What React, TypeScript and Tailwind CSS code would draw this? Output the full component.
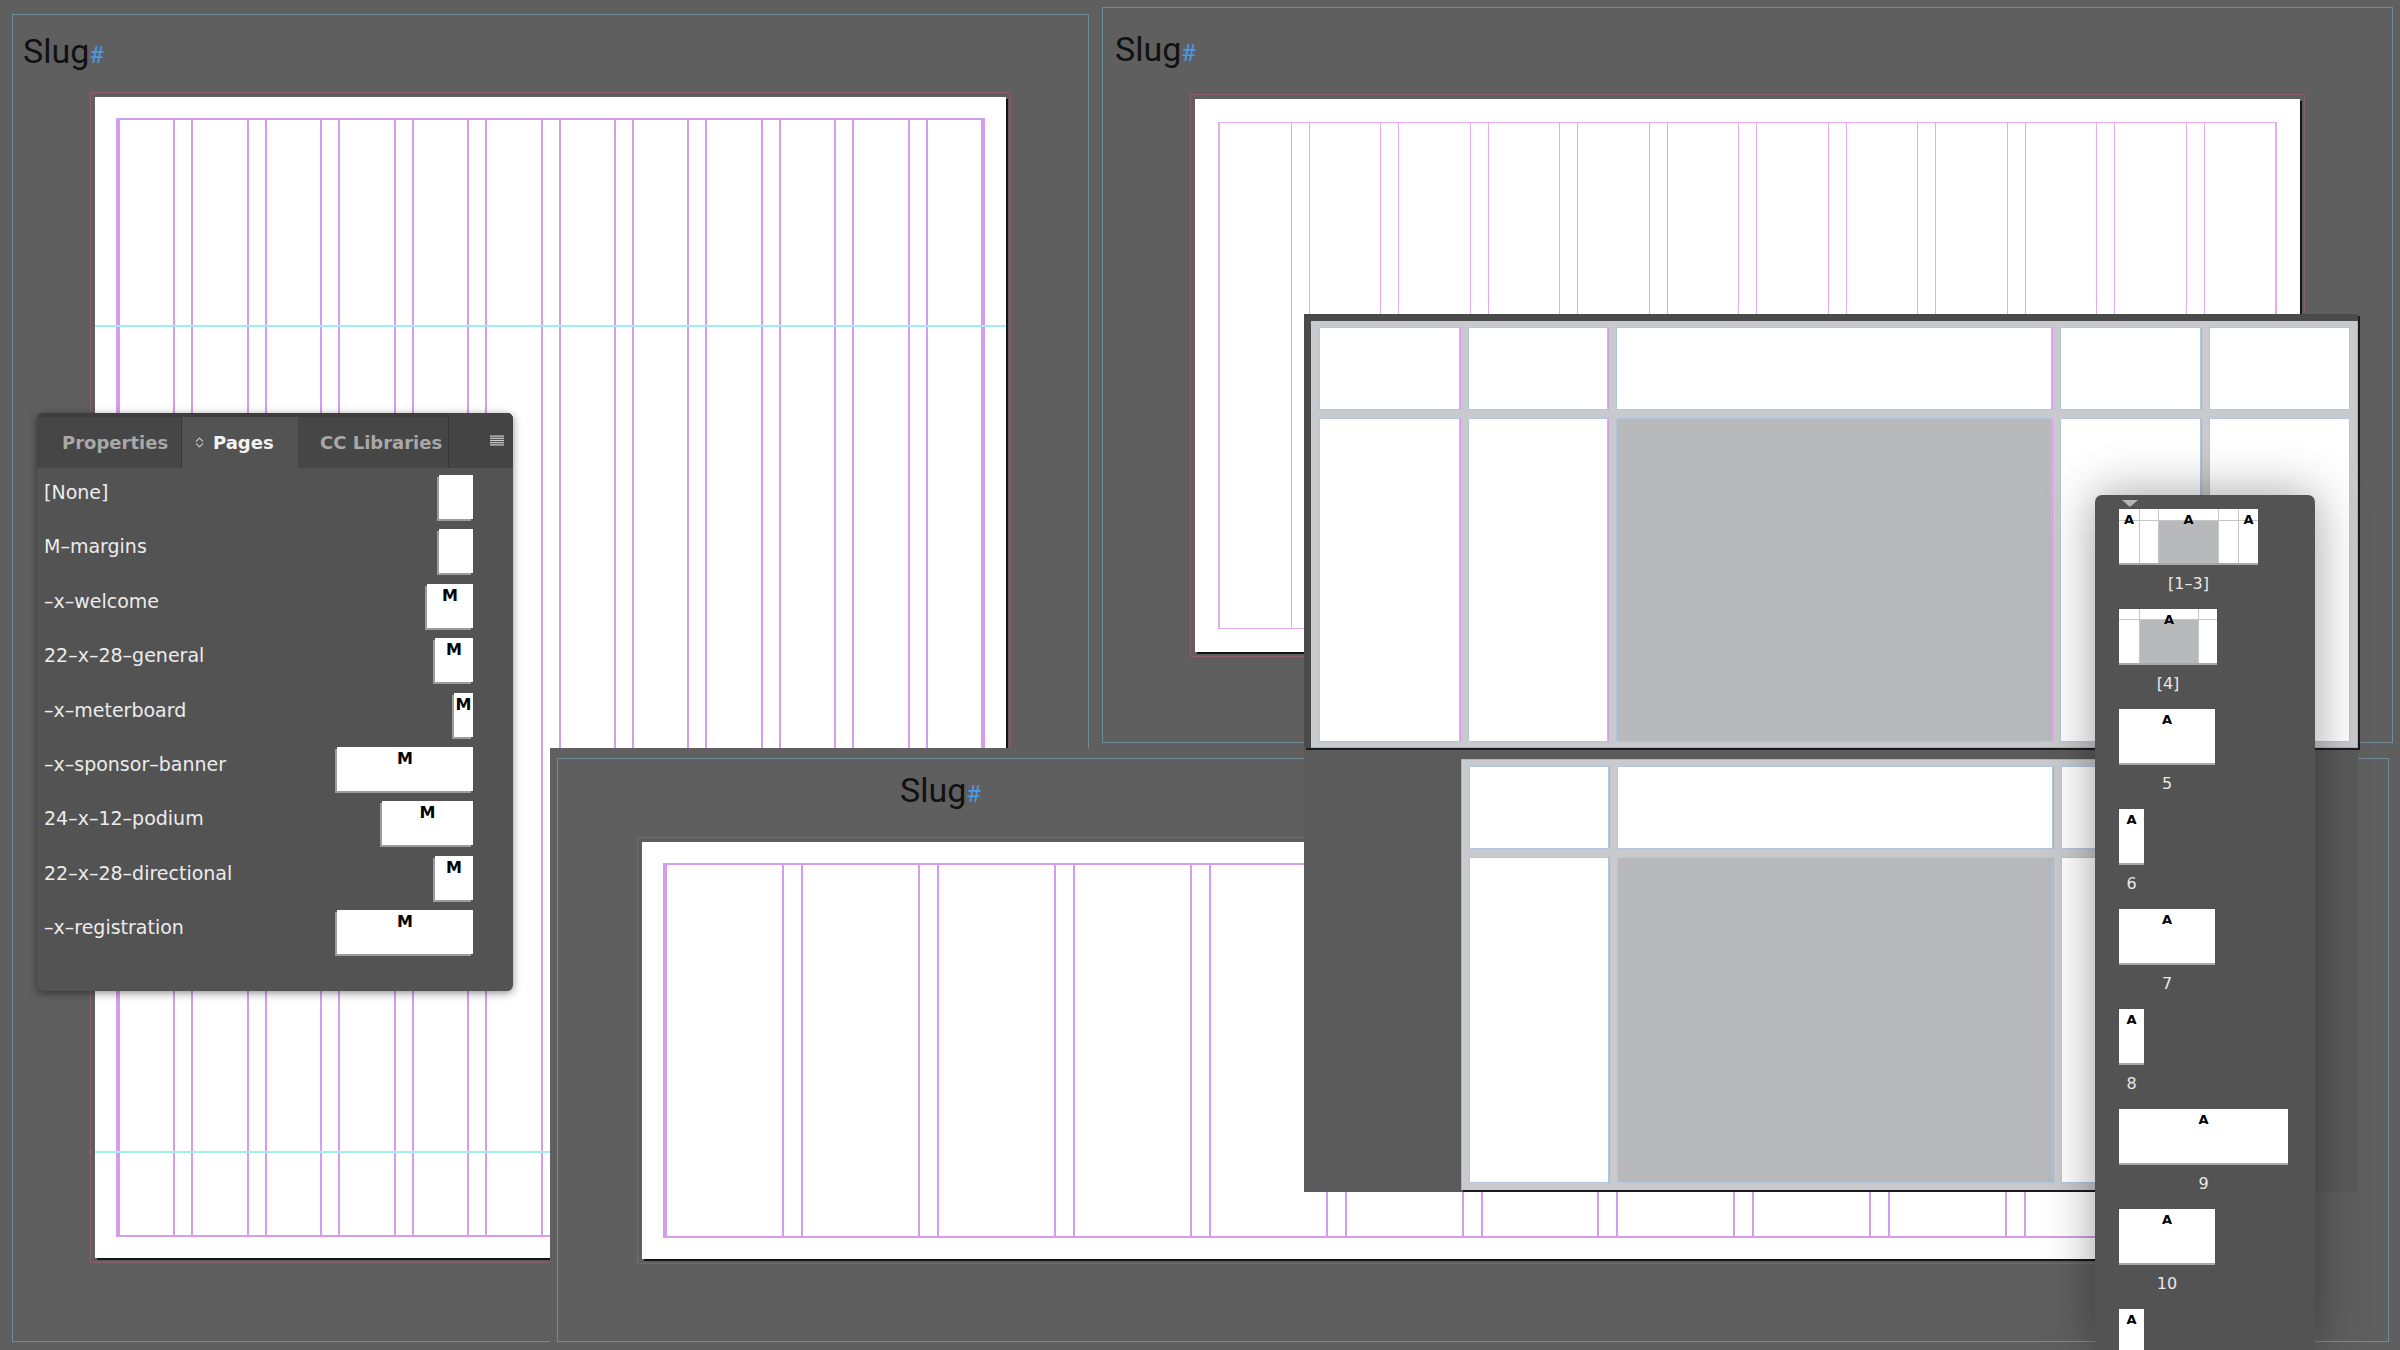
import React from "react";

const UI = "font-['DejaVu_Sans',sans-serif]";

function SlugLabel({ className }: { className: string }) {
  return (
    <div
      className={`flex w-fit items-baseline h-[34px] leading-[34px] font-['Roboto',sans-serif] text-[34px] text-[#111] ${className}`}
    >
      Slug<span className="text-[24px] text-[#4a98e6]">#</span>
    </div>
  );
}

interface PageProps {
  size: string;
  pad: string;
  gap: string;
  line: string;
  children?: React.ReactNode;
}

function Page({ size, pad, gap, line, children }: PageProps) {
  return (
    <div
      className={`relative shrink-0 bg-white outline-1 outline-offset-[4px] outline-[#8b5e6e] shadow-[2px_2px_0_#141414] ${size} ${pad}`}
    >
      <div className={`flex h-full ${line} ${gap}`}>
        {Array.from({ length: 12 }).map((_, i) => (
          <div key={i} className={`flex-1 ${line}`} />
        ))}
      </div>
      {children}
    </div>
  );
}

function FrameCell({ grey, guide }: { grey?: boolean; guide?: boolean }) {
  return (
    <div
      className={`border border-[#b2c6de] ${grey ? "bg-[#b8b9bb]" : "bg-white"} ${
        guide ? "shadow-[1px_0_0_#d39be8]" : ""
      }`}
    />
  );
}

interface Master {
  name: string;
  w: string;
  m: boolean;
}

const masters: Master[] = [
  { name: "[None]", w: "w-[34px]", m: false },
  { name: "M–margins", w: "w-[34px]", m: false },
  { name: "–x–welcome", w: "w-[46px]", m: true },
  { name: "22–x–28–general", w: "w-[38px]", m: true },
  { name: "–x–meterboard", w: "w-[19px]", m: true },
  { name: "–x–sponsor–banner", w: "w-[136px]", m: true },
  { name: "24–x–12–podium", w: "w-[91px]", m: true },
  { name: "22–x–28–directional", w: "w-[38px]", m: true },
  { name: "–x–registration", w: "w-[136px]", m: true },
];

function PagesPanel() {
  return (
    <div
      className={`absolute left-[37px] top-[413px] w-[476px] h-[578px] overflow-hidden rounded-[6px] bg-[#535353] shadow-[0_2px_8px_rgba(0,0,0,0.45)] ${UI}`}
    >
      <div className="flex h-[55px] bg-[#3d3d3d] pt-[4px] text-[18px] font-bold leading-none">
        <div className="flex h-full w-[145px] items-center border-r border-[#353535] bg-[#464646] pl-[25px] text-[#a8a8a8]">
          Properties
        </div>
        <div className="flex h-full w-[116px] items-center bg-[#535353] pl-[13px] text-[#f2f2f2]">
          <svg width="9" height="11" viewBox="0 0 9 11" className="mr-[9px]">
            <path d="M1 4.5 L4.5 1 L8 4.5 M1 6.5 L4.5 10 L8 6.5" stroke="#bdbdbd" strokeWidth="1.2" fill="none" />
          </svg>
          Pages
        </div>
        <div className="flex h-full w-[151px] items-center border-r border-[#353535] bg-[#464646] pl-[22px] text-[#a8a8a8]">
          CC Libraries
        </div>
        <div className="-mt-[4px] flex h-[55px] flex-1 items-center justify-end bg-[#444] pr-[9px]">
          <svg width="14" height="11" viewBox="0 0 14 11">
            {[0.5, 2.7, 4.9, 7.1, 9.3].map((y) => (
              <rect key={y} x="0" y={y} width="14" height="1.2" fill="#cfcfcf" />
            ))}
          </svg>
        </div>
      </div>
      <div className="flex flex-col pt-[2px]">
        {masters.map((r) => (
          <div key={r.name} className="flex h-[54.4px] items-start justify-between pl-[7px] pr-[40px]">
            <span className="mt-[10px] text-[19px] leading-[24px] text-[#ececec]">{r.name}</span>
            <div
              className={`mt-[5px] flex h-[44px] justify-center bg-white pt-[4px] shadow-[-2px_2px_0_#9c9c9c] ${r.w}`}
            >
              {r.m && <span className="text-[16px] font-bold leading-none text-black">M</span>}
            </div>
          </div>
        ))}
      </div>
    </div>
  );
}

function ThumbCol({ w, grey, a, top }: { w: string; grey?: boolean; a?: boolean; top: string }) {
  return (
    <div className={`relative flex flex-col ${w}`}>
      <div className={`${top} shrink-0 border-b border-[#c6c6c6] bg-white`} />
      <div className={`flex-1 ${grey ? "bg-[#b8b9bb]" : "bg-white"}`} />
      {a && (
        <span className="absolute inset-x-0 top-[4px] text-center text-[13px] font-bold leading-none text-black">
          A
        </span>
      )}
    </div>
  );
}

function VLine() {
  return <div className="w-[1px] bg-[#c6c6c6]" />;
}

function ThumbItem({ label, children }: { label?: string; children: React.ReactNode }) {
  return (
    <div className="flex flex-col items-center">
      {children}
      {label && <div className="h-[44px] pt-[9px] text-[16px] leading-[20px] text-[#e8e8e8]">{label}</div>}
    </div>
  );
}

function SimpleThumb({ w }: { w: string }) {
  return (
    <div className={`flex h-[56px] justify-center border-b-2 border-[#a8a8a8] bg-white pt-[4px] ${w}`}>
      <span className="text-[13px] font-bold leading-none text-black">A</span>
    </div>
  );
}

function ThumbPanel() {
  return (
    <div
      className={`absolute left-[2095px] top-[495px] h-[855px] w-[220px] overflow-hidden rounded-t-[7px] bg-[#535353] pl-[24px] pt-[5px] shadow-[0_0_50px_rgba(0,0,0,0.38)] ${UI}`}
    >
      <svg width="16" height="7" viewBox="0 0 16 7" className="ml-[3px] block">
        <path d="M0 0 H16 L8 7 Z" fill="#b6b6b6" />
      </svg>
      <div className="mt-[2px] flex flex-col items-start">
        <ThumbItem label="[1–3]">
          <div className="flex h-[56px] w-[139px] border-b-2 border-[#a8a8a8] bg-white">
            <ThumbCol w="w-[20px]" top="h-[12px]" a />
            <VLine />
            <ThumbCol w="w-[18px]" top="h-[12px]" />
            <VLine />
            <ThumbCol w="w-[59px]" top="h-[12px]" grey a />
            <VLine />
            <ThumbCol w="w-[19px]" top="h-[12px]" />
            <VLine />
            <ThumbCol w="w-[19px]" top="h-[12px]" a />
          </div>
        </ThumbItem>
        <ThumbItem label="[4]">
          <div className="flex h-[56px] w-[98px] border-b-2 border-[#a8a8a8] bg-white">
            <ThumbCol w="w-[20px]" top="h-[11px]" />
            <VLine />
            <ThumbCol w="w-[58px]" top="h-[11px]" grey a />
            <VLine />
            <ThumbCol w="w-[18px]" top="h-[11px]" />
          </div>
        </ThumbItem>
        <ThumbItem label="5">
          <SimpleThumb w="w-[96px]" />
        </ThumbItem>
        <ThumbItem label="6">
          <SimpleThumb w="w-[25px]" />
        </ThumbItem>
        <ThumbItem label="7">
          <SimpleThumb w="w-[96px]" />
        </ThumbItem>
        <ThumbItem label="8">
          <SimpleThumb w="w-[25px]" />
        </ThumbItem>
        <ThumbItem label="9">
          <SimpleThumb w="w-[169px]" />
        </ThumbItem>
        <ThumbItem label="10">
          <SimpleThumb w="w-[96px]" />
        </ThumbItem>
        <ThumbItem>
          <SimpleThumb w="w-[25px]" />
        </ThumbItem>
      </div>
    </div>
  );
}

export default function App() {
  return (
    <div className="relative h-[1350px] w-[2400px] overflow-hidden bg-[#5f5f5f]">
      {/* spread 1 */}
      <div className="absolute left-[12px] top-[14px] h-[1328px] w-[1077px] border border-[#6f8c99]">
        <SlugLabel className="ml-[10px] mt-[19px]" />
        <div className="ml-[82px] mt-[29px] w-fit">
          <Page
            size="w-[911px] h-[1161px]"
            pad="p-[21px]"
            gap="gap-[16px] border-y-2 border-[#d69ced]"
            line="border-x-2 border-[#d69ced]"
          >
            <div className="absolute inset-x-0 top-[228px] h-[2px] bg-[#a3eef5]" />
            <div className="absolute inset-x-0 top-[1054px] h-[2px] bg-[#a3eef5]" />
          </Page>
        </div>
      </div>

      {/* spread 2 */}
      <div className="absolute left-[1102px] top-[7px] h-[736px] w-[1291px] border border-[#6f8c99]">
        <SlugLabel className="ml-[12px] mt-[24px]" />
        <div className="ml-[92px] mt-[33px] w-fit">
          <Page
            size="w-[1105px] h-[553px]"
            pad="p-[23px]"
            gap="gap-[17px] border-y border-[#e3acf2]"
            line="border-x border-[#e3acf2]"
          />
        </div>
      </div>

      {/* spread 3 */}
      <div className="absolute bottom-0 left-[550px] right-0 top-[748px] bg-[#5f5f5f] pl-[7px] pt-[10px]">
        <div className="h-[584px] w-[1832px] border border-[#6f8c99]">
          <SlugLabel className="ml-[342px] mt-[14px]" />
          <div className="ml-[84px] mt-[35px] w-fit">
            <Page
              size="w-[1660px] h-[417px]"
              pad="p-[21px]"
              gap="gap-[17px] border-y-2 border-[#d69ced]"
              line="border-x-2 border-[#d69ced]"
            />
          </div>
        </div>
      </div>

      {/* master page preview */}
      <div className="absolute left-[1304px] top-[314px] h-[878px] w-[1054px] bg-[#5a5a5a]" />
      <div className="absolute left-[1304px] top-[314px] h-[434px] w-[1054px] bg-[#4a4a4a] pl-[7px] pt-[7px] shadow-[2px_2px_0_#1c1a1e]">
        <div className="grid h-full grid-cols-[141px_140px_436px_141px_141px] grid-rows-[83px_1fr] gap-x-[8px] gap-y-[8px] bg-[#c9cacd] px-[8px] py-[6px] shadow-[inset_-1px_-1px_0_#c99be0]">
          <FrameCell guide />
          <FrameCell guide />
          <FrameCell guide />
          <FrameCell guide />
          <FrameCell />
          <FrameCell guide />
          <FrameCell guide />
          <FrameCell grey guide />
          <FrameCell guide />
          <FrameCell />
        </div>
      </div>
      <div className="absolute left-[1461px] top-[759px] grid h-[431px] w-[749px] grid-cols-[140px_436px_141px] grid-rows-[83px_1fr] gap-x-[8px] gap-y-[8px] bg-[#c9cacd] px-[8px] py-[7px] shadow-[inset_1px_1px_0_#c99be0,2px_2px_0_#1c1a1e]">
        <FrameCell guide />
        <FrameCell guide />
        <FrameCell />
        <FrameCell guide />
        <FrameCell grey guide />
        <FrameCell />
      </div>

      <PagesPanel />
      <ThumbPanel />
    </div>
  );
}
